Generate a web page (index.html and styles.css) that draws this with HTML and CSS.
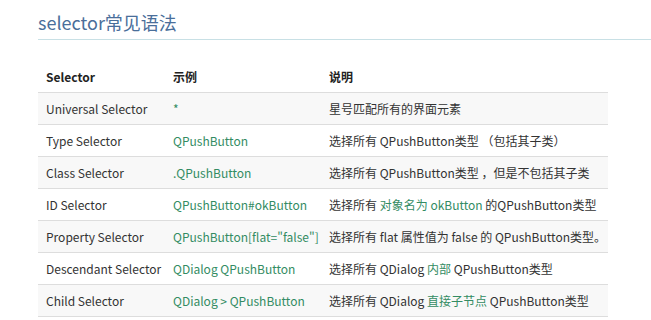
FILE: index.html
```html
<!DOCTYPE html>
<html lang="zh">
<head>
<meta charset="utf-8">
<link rel="stylesheet" href="styles.css">
</head>
<body>
<div class="page">
  <h2 class="title">selector常见语法</h2>
  <table class="tbl">
    <colgroup>
      <col class="c1"><col class="c2"><col class="c3">
    </colgroup>
    <thead>
      <tr><th>Selector</th><th>示例</th><th>说明</th></tr>
    </thead>
    <tbody>
      <tr><td>Universal Selector</td><td class="g">*</td><td>星号匹配所有的界面元素</td></tr>
      <tr><td>Type Selector</td><td class="g">QPushButton</td><td>选择所有 QPushButton类型 （包括其子类）</td></tr>
      <tr><td>Class Selector</td><td class="g">.QPushButton</td><td>选择所有 QPushButton类型 ，但是不包括其子类</td></tr>
      <tr><td>ID Selector</td><td class="g">QPushButton#okButton</td><td>选择所有 <span class="g">对象名为 okButton</span> 的QPushButton类型</td></tr>
      <tr><td>Property Selector</td><td class="g">QPushButton[flat="false"]</td><td>选择所有 flat 属性值为 false 的 QPushButton类型。</td></tr>
      <tr><td>Descendant Selector</td><td class="g">QDialog QPushButton</td><td>选择所有 QDialog <span class="g">内部</span> QPushButton类型</td></tr>
      <tr><td>Child Selector</td><td class="g">QDialog &gt; QPushButton</td><td>选择所有 QDialog <span class="g">直接子节点</span> QPushButton类型</td></tr>
    </tbody>
  </table>
</div>
</body>
</html>
```
FILE: styles.css
```css
html, body {
  margin: 0;
  padding: 0;
  background: #fff;
}
.page {
  padding: 0 0 0 38px;
  font-family: "Noto Sans CJK SC", "Noto Sans", sans-serif;
  color: #333;
}
.title {
  margin: 0;
  padding-top: 8px;
  height: 31px;
  line-height: 28px;
  font-size: 18px;
  font-weight: normal;
  color: #4a6e9a;
  border-bottom: 1px solid #c8e0e5;
}
.tbl {
  margin-top: 21px;
  width: 570px;
  table-layout: fixed;
  border-collapse: collapse;
  font-size: 12px;
}
.c1 { width: 127px; }
.c2 { width: 156px; }
.c3 { width: 287px; }
.tbl th, .tbl td {
  height: 31px;
  padding: 0 0 0 8px;
  text-align: left;
  white-space: nowrap;
  overflow: visible;
  vertical-align: middle;
}
.tbl th {
  font-weight: bold;
  color: #222;
  border-bottom: 1px solid #ddd;
}
.tbl td {
  border-bottom: 1px solid #ddd;
}
.tbl tbody tr:nth-child(odd) td {
  background: #f8f8f8;
}
.g {
  color: #338c63;
}
```
